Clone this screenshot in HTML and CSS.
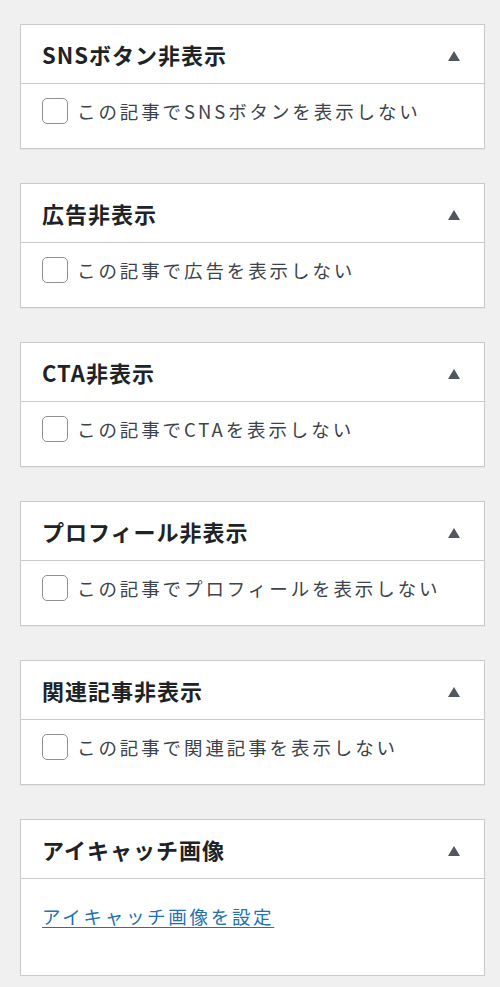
FILE: index.html
```html
<!DOCTYPE html>
<html lang="ja">
<head>
<meta charset="utf-8">
<link rel="stylesheet" href="styles.css">
</head>
<body>
<div class="sidebar">
  <section class="box">
    <div class="box-head"><h2 class="box-title">SNSボタン非表示</h2><span class="toggle"></span></div>
    <div class="box-body"><label class="check"><span class="cb"></span><span class="check-text">この記事でSNSボタンを表示しない</span></label></div>
  </section>
  <section class="box">
    <div class="box-head"><h2 class="box-title">広告非表示</h2><span class="toggle"></span></div>
    <div class="box-body"><label class="check"><span class="cb"></span><span class="check-text">この記事で広告を表示しない</span></label></div>
  </section>
  <section class="box">
    <div class="box-head"><h2 class="box-title">CTA非表示</h2><span class="toggle"></span></div>
    <div class="box-body"><label class="check"><span class="cb"></span><span class="check-text">この記事でCTAを表示しない</span></label></div>
  </section>
  <section class="box">
    <div class="box-head"><h2 class="box-title">プロフィール非表示</h2><span class="toggle"></span></div>
    <div class="box-body"><label class="check"><span class="cb"></span><span class="check-text">この記事でプロフィールを表示しない</span></label></div>
  </section>
  <section class="box">
    <div class="box-head"><h2 class="box-title">関連記事非表示</h2><span class="toggle"></span></div>
    <div class="box-body"><label class="check"><span class="cb"></span><span class="check-text">この記事で関連記事を表示しない</span></label></div>
  </section>
  <section class="box">
    <div class="box-head"><h2 class="box-title">アイキャッチ画像</h2><span class="toggle"></span></div>
    <div class="box-body tall"><a class="link" href="#">アイキャッチ画像を設定</a></div>
  </section>
</div>
</body>
</html>
```

FILE: styles.css
```css
html, body {
  margin: 0;
  padding: 0;
  background: #f0f0f1;
}
body {
  font-family: "Noto Sans CJK JP", "Noto Sans", sans-serif;
  color: #1d2327;
}
.sidebar {
  display: flex;
  flex-direction: column;
  gap: 34px;
  padding: 24px 0 0 20px;
  width: 465px;
}
.box {
  background: #fff;
  border: 1px solid #c9cacc;
  box-shadow: 0 1px 1px rgba(0,0,0,0.04);
}
.box-head {
  height: 58px;
  display: flex;
  align-items: center;
  justify-content: space-between;
  padding: 0 24px 0 21px;
  border-bottom: 1px solid #c9cacc;
}
.box-title {
  margin: 0;
  font-size: 22px;
  font-weight: 700;
  letter-spacing: 1px;
  line-height: 1;
  color: #1d2327;
}
.toggle {
  width: 0;
  height: 0;
  border-left: 6.5px solid transparent;
  border-right: 6.5px solid transparent;
  border-bottom: 10px solid #50575e;
  margin-top: 4px;
}
.box-body {
  height: 64px;
  padding: 0 21px;
  box-sizing: border-box;
  display: flex;
  align-items: flex-start;
  padding-top: 14px;
}
.box-body.tall {
  height: 96px;
  padding-top: 26px;
}
.check {
  display: flex;
  align-items: center;
  gap: 9px;
}
.cb {
  width: 26px;
  height: 26px;
  box-sizing: border-box;
  border: 1.5px solid #8c8f94;
  border-radius: 5px;
  background: #fff;
}
.check-text {
  font-size: 18.5px;
  letter-spacing: 2.9px;
  color: #3c434a;
  line-height: 1;
}
.link {
  font-size: 18.5px;
  letter-spacing: 2.7px;
  color: #2271b1;
  text-decoration: underline;
  text-underline-offset: 3px;
  line-height: 1.2;
}
```
